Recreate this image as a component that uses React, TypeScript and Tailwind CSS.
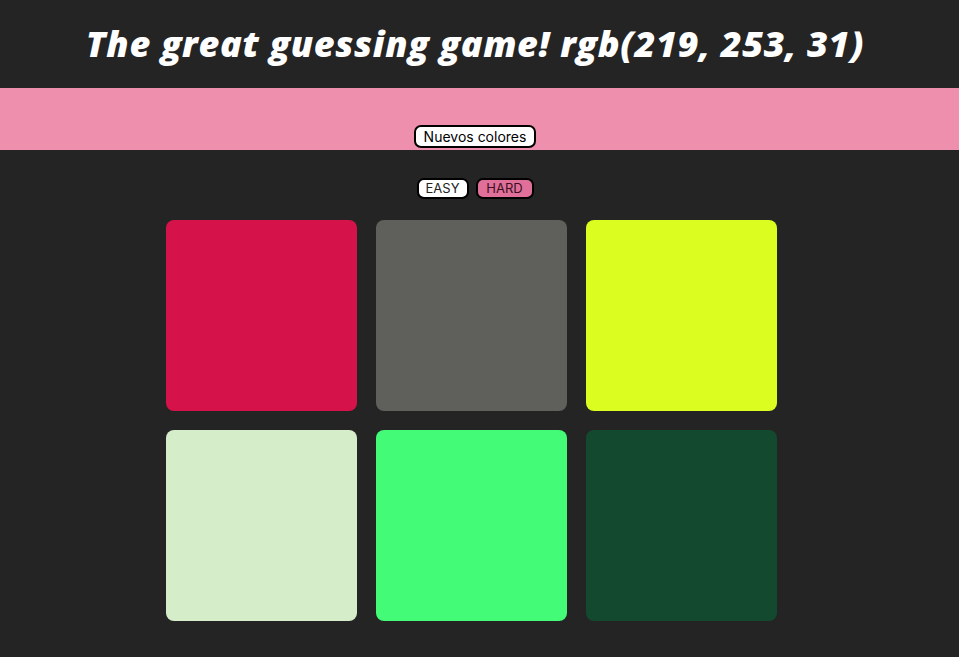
export default function App() {
  const colors = ['#d6124a', '#5f605b', '#dbfd1f', '#d5edc9', '#44fb77', '#134a2f']

  return (
    <main className="min-h-screen bg-[#242424] font-['Inter',sans-serif]">
      <header className="h-[88px] flex items-center justify-center pr-[9px]">
        <h1 className="text-[36px] font-extrabold italic text-white tracking-[0.65px] font-['Open_Sans','Inter',sans-serif]">
          The great guessing game! rgb(219, 253, 31)
        </h1>
      </header>

      <div className="h-[62px] bg-[#ef8fae] flex items-end justify-center pb-[2px] pr-[9px]">
        <button className="h-[23px] w-[122px] bg-white text-black text-[14px] border-2 border-black rounded-[7px] leading-none">
          Nuevos colores
        </button>
      </div>

      <div className="flex justify-center gap-[7px] pt-[28px] pr-[9px]">
        <button className="h-[21px] w-[52px] bg-white text-[#222] text-[13px] border-2 border-black rounded-[7px] leading-none">
          EASY
        </button>
        <button className="h-[21px] w-[58px] bg-[#e0709a] text-[#3a0f1e] text-[13px] border-2 border-black rounded-[7px] leading-none">
          HARD
        </button>
      </div>

      <section className="grid grid-cols-[191px_191px_191px] gap-[19px] justify-center pt-[21px] pr-[16px]">
        {colors.map((c) => (
          <div key={c} className="h-[191px] rounded-[8px]" style={{ backgroundColor: c }} />
        ))}
      </section>
    </main>
  )
}
